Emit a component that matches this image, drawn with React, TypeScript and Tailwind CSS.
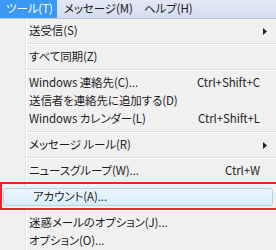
import React from "react";

type Item =
  | { sep: true }
  | { label: string; shortcut?: string; sub?: boolean; active?: boolean };

const items: Item[] = [
  { label: "送受信(S)", sub: true },
  { sep: true },
  { label: "すべて同期(Z)" },
  { sep: true },
  { label: "Windows 連絡先(C)...", shortcut: "Ctrl+Shift+C" },
  { label: "送信者を連絡先に追加する(D)" },
  { label: "Windows カレンダー(L)", shortcut: "Ctrl+Shift+L" },
  { sep: true },
  { label: "メッセージ ルール(R)", sub: true },
  { sep: true },
  { label: "ニュースグループ(W)...", shortcut: "Ctrl+W" },
  { sep: true },
  { label: "アカウント(A)...", active: true },
  { sep: true },
  { label: "迷惑メールのオプション(J)..." },
  { label: "オプション(O)..." },
];

const font = {
  fontFamily: '"Noto Sans CJK JP", "Liberation Sans", sans-serif',
};

function Row({ item }: { item: Item }) {
  if ("sep" in item) {
    return (
      <div className="h-[8px] flex flex-col justify-center pl-[27px]">
        <div className="h-px bg-[#e0e0e0]" />
        <div className="h-px bg-white" />
      </div>
    );
  }
  return (
    <div
      className={
        "h-[18px] flex items-center pl-[29px] pr-[16px] relative " +
        (item.active
          ? "mx-[3px] pl-[26px] pr-[13px] rounded-[3px] border border-[#a9d7f2] bg-gradient-to-b from-[#eaf5fd] to-[#d9eefb]"
          : "")
      }
    >
      <span className="flex-1 whitespace-nowrap">{item.label}</span>
      {item.shortcut && <span className="whitespace-nowrap">{item.shortcut}</span>}
      {item.sub && (
        <svg width="4" height="7" viewBox="0 0 4 7" className="absolute right-[9px]">
          <path d="M0 0 L4 3.5 L0 7 Z" fill="#222" />
        </svg>
      )}
    </div>
  );
}

export default function App() {
  return (
    <div
      className="w-[276px] h-[250px] overflow-hidden bg-[#f0f0f0] text-[11.5px] leading-none text-[#1e1e1e] relative [font-feature-settings:'palt'] tracking-[-0.1px]"
      style={font}
    >
      <div className="h-[19px] flex items-stretch bg-gradient-to-b from-[#e3e8f4] to-[#d5dcef] border-b border-[#b9c0cc]">
        <div className="w-[57px] bg-[#3b99f4] text-white flex items-center pl-[6px] whitespace-nowrap">ツール(T)</div>
        <div className="flex items-center pl-[7px] w-[87px] whitespace-nowrap">メッセージ(M)</div>
        <div className="flex items-center whitespace-nowrap">ヘルプ(H)</div>
      </div>
      <div className="relative pt-[3px]">
        <div className="absolute left-[25px] top-0 bottom-0 w-px bg-[#e2e3e3]" />
        <div className="absolute left-[26px] top-0 bottom-0 w-px bg-white" />
        {items.map((it, i) => (
          <Row key={i} item={it} />
        ))}
      </div>
      <div className="absolute left-0 top-[182px] w-[280px] h-[28px] border-2 border-[#e8262c]" />
    </div>
  );
}
